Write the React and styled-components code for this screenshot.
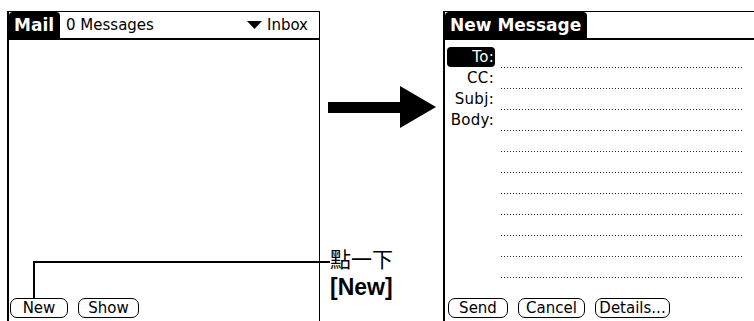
import styled, { createGlobalStyle } from 'styled-components'

const GlobalStyle = createGlobalStyle`
    body {
        margin: 0;
        background: #fff;
        font-family: "DejaVu Sans", "Liberation Sans", sans-serif;
        color: #000;
    }
`

const fields = [
    { label: 'To:', active: true },
    { label: 'CC:' },
    { label: 'Subj:' },
    { label: 'Body:' },
    {}, {}, {}, {}, {}, {}, {},
]

const TriangleDown = () => (
    <svg width="15" height="8" viewBox="0 0 15 8">
        <polygon points="0,0 15,0 7.5,8" fill="#000" />
    </svg>
)

const BigArrow = () => (
    <svg width="108" height="42" viewBox="0 0 108 42">
        <rect x="0" y="16" width="73" height="11" fill="#000" />
        <polygon points="72,0 108,21 72,42" fill="#000" />
    </svg>
)

const App = () => {
    return (
        <Page>
            <GlobalStyle />
            <Screen $w={313} $right>
                <TitleBar>
                    <Tab>Mail</Tab>
                    <Status>0 Messages</Status>
                    <Category>
                        <TriangleDown />
                        Inbox
                    </Category>
                </TitleBar>
                <ButtonBar $pad={1}>
                    <Button $w={58}>New</Button>
                    <Button $w={61}>Show</Button>
                </ButtonBar>
            </Screen>

            <Middle>
                <ArrowWrap>
                    <BigArrow />
                </ArrowWrap>
                <Caption>
                    <CaptionZh>點一下</CaptionZh>
                    <CaptionEn>[New]</CaptionEn>
                </Caption>
            </Middle>

            <Screen $w={311}>
                <TitleBar>
                    <Tab>New Message</Tab>
                </TitleBar>
                <Fields>
                    {fields.map((f, i) => (
                        <Row key={i}>
                            <Label $active={f.active}>{f.label || ''}</Label>
                            <Dots />
                        </Row>
                    ))}
                </Fields>
                <ButtonBar $pad={3}>
                    <Button $w={60}>Send</Button>
                    <Button $w={67}>Cancel</Button>
                    <Button $w={75}>Details...</Button>
                </ButtonBar>
            </Screen>

            <Leader />
        </Page>
    )
}

const Page = styled.div`
    position: relative;
    display: flex;
    width: 754px;
    height: 321px;
    padding: 11px 0 0 7px;
    box-sizing: border-box;
    overflow: hidden;
`
const Screen = styled.div`
    width: ${p => p.$w}px;
    flex-shrink: 0;
    display: flex;
    flex-direction: column;
    border-top: 1px solid #000;
    border-left: 2px solid #000;
    border-right: ${p => (p.$right ? '1px solid #000' : 'none')};
    box-sizing: border-box;
`
const TitleBar = styled.div`
    display: flex;
    align-items: center;
    height: 28px;
    border-bottom: 2px solid #000;
    box-sizing: border-box;
    font-size: 15px;
`
const Tab = styled.div`
    align-self: stretch;
    display: flex;
    align-items: center;
    padding: 0 6px 0 5px;
    background: #000;
    color: #fff;
    font-weight: bold;
    font-size: 17px;
    border-radius: 4px 4px 0 0;
`
const Status = styled.span`
    margin-left: 6px;
`
const Category = styled.span`
    margin-left: auto;
    margin-right: 11px;
    display: flex;
    align-items: center;
    gap: 5px;
`
const Fields = styled.div`
    display: flex;
    flex-direction: column;
    padding-top: 7px;
`
const Row = styled.div`
    display: flex;
    height: 21px;
`
const Label = styled.div`
    width: 48px;
    height: 20px;
    margin-left: 2px;
    padding-right: 1px;
    box-sizing: border-box;
    text-align: right;
    font-size: 15px;
    line-height: 20px;
    letter-spacing: 0.3px;
    border-radius: 4px;
    background: ${p => (p.$active ? '#000' : 'transparent')};
    color: ${p => (p.$active ? '#fff' : '#000')};
`
const Dots = styled.div`
    align-self: flex-end;
    width: 241px;
    height: 1px;
    margin-left: 6px;
    background: repeating-linear-gradient(to right, #222 0 1px, transparent 1px 3px);
`
const ButtonBar = styled.div`
    margin-top: auto;
    display: flex;
    gap: 10px;
    padding: 0 0 3px ${p => p.$pad}px;
`
const Button = styled.div`
    width: ${p => p.$w}px;
    height: 20px;
    box-sizing: border-box;
    border: 1px solid #000;
    border-radius: 7px;
    font-size: 15px;
    line-height: 18px;
    text-align: center;
    background: #fff;
`
const Middle = styled.div`
    width: 123px;
    flex-shrink: 0;
    display: flex;
    flex-direction: column;
`
const ArrowWrap = styled.div`
    margin-top: 75px;
    padding-left: 8px;
    line-height: 0;
`
const Caption = styled.div`
    margin-top: auto;
    margin-bottom: 20px;
    padding-left: 10px;
    display: flex;
    flex-direction: column;
`
const CaptionZh = styled.span`
    font-family: "Noto Sans CJK TC", sans-serif;
    font-size: 21px;
    line-height: 29px;
`
const CaptionEn = styled.span`
    font-family: "Liberation Sans", Arial, sans-serif;
    font-weight: bold;
    font-size: 23px;
    line-height: 28px;
`
const Leader = styled.div`
    position: absolute;
    left: 33px;
    top: 261px;
    width: 297px;
    height: 37px;
    border-top: 2px solid #000;
    border-left: 2px solid #000;
    box-sizing: border-box;
`

export default App
